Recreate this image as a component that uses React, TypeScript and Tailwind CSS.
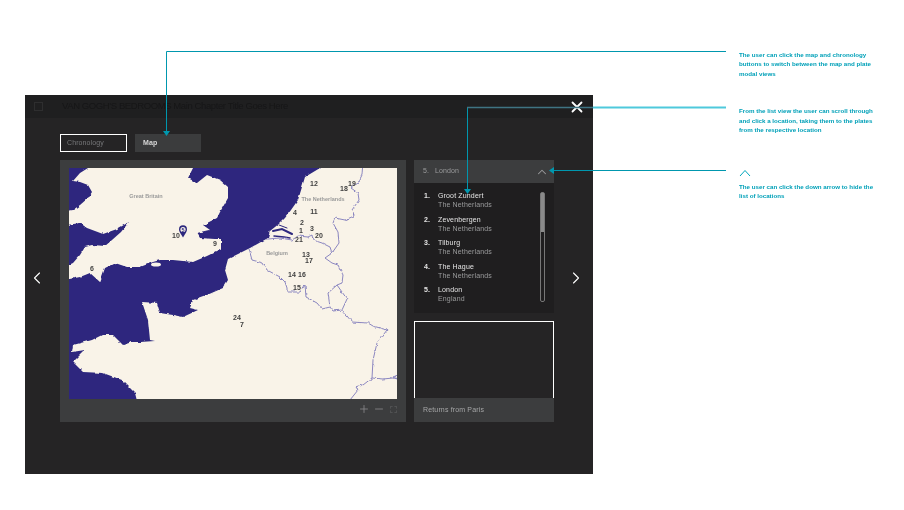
import { ChevronLeft, ChevronRight, ChevronUp, Minus, Plus, X } from "lucide-react";

const locations = [
  { n: "1.", name: "Groot Zundert", place: "The Netherlands" },
  { n: "2.", name: "Zevenbergen", place: "The Netherlands" },
  { n: "3.", name: "Tilburg", place: "The Netherlands" },
  { n: "4.", name: "The Hague", place: "The Netherlands" },
  { n: "5.", name: "London", place: "England" },
];

const mapNumbers: [string, number, number][] = [
  ["12", 314, 184], ["19", 352, 184], ["18", 344, 189], ["4", 295, 213], ["11", 314, 212],
  ["2", 302, 223], ["1", 301, 231], ["3", 312, 229], ["20", 319, 236], ["21", 299, 240],
  ["13", 306, 255], ["17", 309, 261], ["14", 292, 275], ["16", 302, 275], ["15", 297, 288],
  ["24", 237, 318], ["7", 242, 325], ["9", 215, 244], ["10", 176, 236], ["6", 92, 269],
];

const mapLabels: [string, number, number][] = [
  ["Great Britain", 146, 196],
  ["The Netherlands", 323, 199],
  ["Belgium", 277, 253],
];

function EuropeMap() {
  return (
    <svg viewBox="69 168 328 231" className="block h-[231px] w-[328px]">
      <defs>
        {/* roughens the traced coast so it isn't so polygonal */}
        <filter id="rough" filterUnits="userSpaceOnUse" x="40" y="140" width="380" height="280">
          <feTurbulence type="fractalNoise" baseFrequency="0.18" numOctaves="2" seed="4" />
          <feDisplacementMap in="SourceGraphic" scale="3" xChannelSelector="R" yChannelSelector="G" />
        </filter>
      </defs>
      <rect x="69" y="168" width="328" height="231" fill="#f9f3e8" />
      <g fill="#2d287e" filter="url(#rough)">
        <path d="M60 160L90 160L88 168L80 173L73 181L80 182L88 185L92 192L88 198L80 205L73 210L60 212Z" />
        <path d="M60 226L80 223L87 228L103 234L117 229L129 222L121 232L112 240L105 246L93 245L85 247L80 255L73 263L60 269Z" />
        <path d="M60 281L80 277L90 273L100 282L105 268L115 263L127 267L140 267L153 262L160 260L173 260L193 262L207 256L221 249L221 239L215 239L200 238L197 233L210 230L203 225L217 218L220 212L228 198L228 187L220 180L207 175L197 183L188 178L197 160L325 160L320 168L305 177L302 187L298 200L291 210L285 218L280 223L270 231L268 238L250 248L240 253L228 259L225 270L228 280L223 288L207 295L193 300L190 308L198 310L183 317L173 315L160 313L157 303L142 302L148 320L150 340L155 341L140 342L132 342L123 345L113 335L102 335L92 340L73 345L72 352L85 350L73 362L83 372L103 373L122 380L130 388L135 393L138 405L60 405Z" />
      </g>
      <ellipse cx="156" cy="264.5" rx="5" ry="2" fill="#f9f3e8" />
      <g fill="none" stroke="#2d287e" strokeLinecap="round">
        <path d="M279 225L287 228" strokeWidth="1" />
        <path d="M273 231L282 229L292 234" strokeWidth="2" />
        <path d="M274 236L284 237L290 238" strokeWidth="1.5" />
      </g>
      <g fill="none" stroke="#7f7abb" strokeWidth="0.9" strokeLinejoin="round" filter="url(#rough)">
        <path d="M363 160L362 175L358 183L351 188L358 193L359 200L352 210L354 216L345 220L335 218L333 223L338 232L339 243L332 253L325 258L332 263L338 265L343 275L342 283L337 285L328 293L330 307" />
        <path d="M337 285L347 299L342 310" />
        <path d="M268 239L280 238L292 240L298 236L308 237L312 235L313 240L322 243L330 247L332 253" />
        <path d="M249 249L252 260L263 263L267 270L280 277L285 282L287 288L287 292L300 292L305 285L306 297L317 303L322 309L330 307L333 311L342 310L352 322L368 323L373 326L387 330L377 343L373 360L372 378L383 379L393 378L405 379" />
        <path d="M372 378L363 385L356 387L358 390L346 405" />
        <path d="M405 372L393 377L397 379" />
      </g>
      <g fontFamily="'Liberation Sans', sans-serif" fontSize="5.5" fontWeight="700" fill="#9a9a9a" textAnchor="middle">
        {mapLabels.map(([label, x, y]) => (
          <text key={label} x={x} y={y + 2}>{label}</text>
        ))}
      </g>
      <g fontFamily="'Liberation Sans', sans-serif" fontSize="7" fontWeight="700" fill="#3f3f3f" textAnchor="middle">
        {mapNumbers.map(([label, x, y]) => (
          <text key={label} x={x} y={y + 2.4}>{label}</text>
        ))}
      </g>
      <path d="M183 237.5C180.5 233.5 179 231.5 179 229.5A4 4.2 0 0 1 187 229.5C187 231.5 185.5 233.5 183 237.5Z" fill="#2d287e" />
      <circle cx="183" cy="229.5" r="2.6" fill="#f9f3e8" />
      <text x="183" y="231.5" fontFamily="'Liberation Sans', sans-serif" fontSize="5.5" fontWeight="700" fill="#2d287e" textAnchor="middle">5</text>
    </svg>
  );
}

function Annotations() {
  return (
    <svg viewBox="0 0 904 510" className="pointer-events-none absolute left-0 top-0 h-[510px] w-[904px]">
      <g fill="none" stroke="#0097ae" strokeWidth="1">
        <path d="M726 51.5H166.5V133" />
        <path d="M550 170.5H726" />
        <path d="M467.5 108V191" />
        <path d="M740 176L745 170.5L750 176" stroke="#00a7bd" />
      </g>
      <path d="M467 107.5H593" stroke="#3f7483" strokeWidth="1.5" />
      <path d="M593 107.5H726" stroke="#4fc9dc" strokeWidth="2" />
      <g fill="#0097ae">
        <path d="M163 131H170L166.5 136Z" />
        <path d="M464 189H471L467.5 194Z" />
        <path d="M554 167L549 170.5L554 174Z" />
      </g>
    </svg>
  );
}

export default function App() {
  return (
    <main className="relative h-[510px] w-[904px] overflow-hidden bg-white font-['Liberation_Sans',sans-serif] will-change-transform">
      <div className="pl-[25px] pt-[95px]">
        <section className="flex h-[379px] w-[568px] flex-col bg-[#252425]">
          <header className="flex h-[23px] items-center bg-[#1f1f20] pl-[9px] pr-[7px]">
            <span className="h-[9px] w-[9px] border border-[#2e2e2f]" />
            <h1 className="ml-[19px] text-[9.5px] tracking-[-0.4px] text-[#161617]">
              VAN GOGH'S BEDROOMS Main Chapter Title Goes Here
            </h1>
            <X className="ml-auto h-[18px] w-[18px] text-white" strokeWidth={2.4} />
          </header>

          <div className="pl-[35px] pt-[16px]">
            <div className="flex gap-[8px] text-[7px] tracking-[0.1px]">
              <button className="h-[18px] w-[67px] border border-white pl-[6px] text-left text-[#77787a]">
                Chronology
              </button>
              <button className="h-[18px] w-[66px] bg-[#3b3c3d] pl-[8px] text-left font-bold text-[#d8d8d8]">
                Map
              </button>
            </div>

            <div className="mt-[8px] flex">
              <ChevronLeft className="-ml-[33px] mr-[13px] mt-[108px] h-[20px] w-[20px] text-white" strokeWidth={1.3} />
              <div className="flex h-[262px] w-[346px] flex-col bg-[#3c3d3e] px-[9px] pt-[8px]">
                <EuropeMap />
                <div className="mt-[4px] flex items-center justify-end">
                  <Plus className="h-[12px] w-[12px] text-[#8b8c8d]" strokeWidth={1.6} />
                  <Minus className="ml-[3px] h-[12px] w-[12px] text-[#8b8c8d]" strokeWidth={1.6} />
                  <span className="ml-[5.5px] h-[7px] w-[7px] border border-dashed border-[#505152]" />
                </div>
              </div>

              <div className="ml-[8px] flex w-[140px] flex-col">
                <div className="flex h-[23px] items-center bg-[#3c3d3e] pl-[9px] pr-[5.5px] text-[7px] tracking-[0.1px] text-[#9a9b9c]">
                  <span className="w-[12px]">5.</span>
                  <span>London</span>
                  <ChevronUp className="ml-auto h-[14px] w-[14px]" strokeWidth={1.8} />
                </div>
                <div className="flex h-[130px] bg-[#1f1e1f] pl-[10px] pt-[8px]">
                  <ol className="w-[116px]">
                    {locations.map((loc) => (
                      <li key={loc.n} className="flex h-[23.6px] text-[7px] leading-[9px] tracking-[0.15px]">
                        <span className="w-[14px] font-bold text-[#e4e4e4]">{loc.n}</span>
                        <div>
                          <p className="text-[#e4e4e4]">{loc.name}</p>
                          <p className="text-[#9a9b9c]">{loc.place}</p>
                        </div>
                      </li>
                    ))}
                  </ol>
                  <div className="mt-[1px] h-[110px] w-[5px] rounded-[2px] border border-[#777]">
                    <div className="h-[39px] bg-[#8a8a8a]" />
                  </div>
                </div>
                <div className="mt-[8px] h-[77px] border-x border-t border-white" />
                <div className="flex h-[24px] items-center bg-[#3c3d3e] pl-[9px] text-[7px] tracking-[0.15px] text-[#a5a6a7]">
                  Returns from Paris
                </div>
              </div>

              <ChevronRight className="ml-[12px] mt-[108px] h-[20px] w-[20px] text-white" strokeWidth={1.3} />
            </div>
          </div>
        </section>
      </div>

      <Annotations />

      <div className="absolute left-[739px] top-[50px] w-[150px] text-[6.2px] font-bold leading-[9.4px] text-[#00a0b8]">
        <p>
          The user can click the map and chronology
          <br />
          buttons to switch between the map and plate
          <br />
          modal views
        </p>
        <p className="mt-[28px]">
          From the list view the user can scroll through
          <br />
          and click a location, taking them to the plates
          <br />
          from the respective location
        </p>
        <p className="mt-[47.5px]">
          The user can click the down arrow to hide the
          <br />
          list of locations
        </p>
      </div>
    </main>
  );
}
